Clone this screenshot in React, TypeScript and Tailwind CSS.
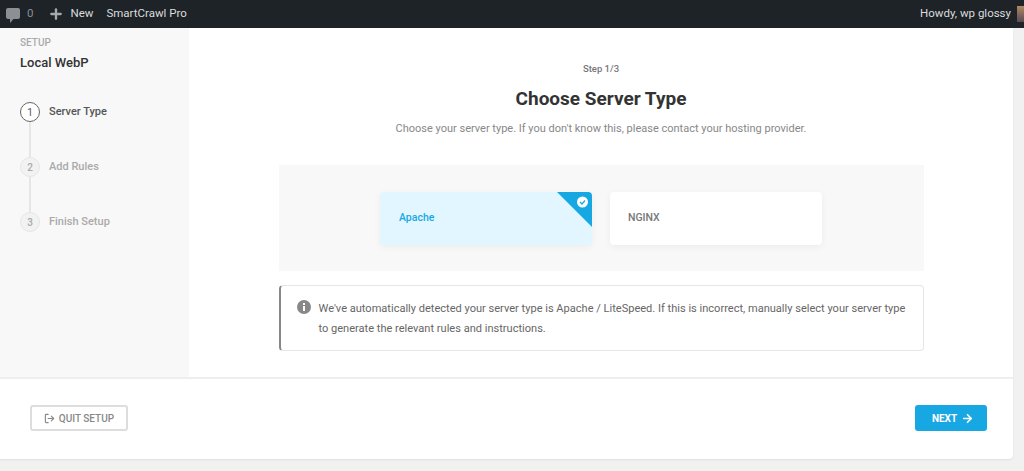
import { ArrowRight, LogOut, Plus } from 'lucide-react';

function Step({ n, label, active, last }: { n: number; label: string; active?: boolean; last?: boolean }) {
	return (
		<div className="relative flex h-[55px] items-start">
			{!last && <div className="absolute left-[29px] top-[20px] h-[35px] w-[2px] bg-[#e6e6e6]" />}
			<div
				className={
					active
						? 'ml-[20px] flex h-[20px] w-[20px] items-center justify-center rounded-full border border-[#666] bg-white text-[10px] text-[#555]'
						: 'ml-[20px] flex h-[20px] w-[20px] items-center justify-center rounded-full border border-[#e6e6e6] bg-[#f2f2f2] text-[10px] font-medium text-[#aaa]'
				}
			>
				{n}
			</div>
			<span
				className={
					active
						? 'ml-[9px] text-[11px] font-medium leading-[20px] text-[#555]'
						: 'ml-[9px] text-[11px] font-medium leading-[20px] text-[#aaa]'
				}
			>
				{label}
			</span>
		</div>
	);
}

export default function App() {
	return (
		<div className="h-[471px] w-[1024px] overflow-hidden bg-[#f1f1f1] font-['Roboto',sans-serif]">
			<header className="flex h-[28px] items-center justify-between bg-[#1d2327] text-[11.5px] text-[#dcdcde]">
				<div className="flex items-center">
					<svg className="ml-[6px] mt-[2px]" width="14" height="15" viewBox="0 0 14 15">
						<path d="M2 0h10a2 2 0 0 1 2 2v7a2 2 0 0 1-2 2H7.5L4 15v-4H2a2 2 0 0 1-2-2V2a2 2 0 0 1 2-2Z" fill="#8c8f94" />
					</svg>
					<span className="ml-[7px] text-[#8c8f94]">0</span>
					<Plus size={16} strokeWidth={3.5} className="ml-[15px] text-[#a7aaad]" />
					<span className="ml-[6px]">New</span>
					<span className="ml-[13px]">SmartCrawl Pro</span>
				</div>
				<div className="flex items-center">
					<span>Howdy, wp glossy</span>
					<div className="ml-[6px] h-[16px] w-[7px] bg-gradient-to-b from-[#b08a60] to-[#5a4a55]" />
				</div>
			</header>

			<div className="h-[431px] w-[1013px] rounded-br-[4px] bg-white shadow-[0_1px_2px_rgba(0,0,0,0.08)]">
				<div className="flex h-[351px] border-b-2 border-[#eeeeee]">
					<aside className="h-full w-[189px] bg-[#f8f8f8]">
						<div className="ml-[20px] mt-[9px] text-[10px] font-medium leading-[12px] text-[#aaa]">SETUP</div>
						<div className="ml-[20px] mt-[6px] text-[13px] font-medium leading-[16px] text-[#333]">Local WebP</div>
						<div className="mt-[31px]">
							<Step n={1} label="Server Type" active />
							<Step n={2} label="Add Rules" />
							<Step n={3} label="Finish Setup" last />
						</div>
					</aside>

					<main className="flex flex-1 flex-col items-center">
						<div className="mt-[35px] text-[9.5px] font-medium leading-[12px] text-[#777]">Step 1/3</div>
						<h1 className="mt-[11px] text-[19px] font-bold leading-[26px] text-[#333]">Choose Server Type</h1>
						<p className="mt-[9px] text-[11px] leading-[16px] text-[#888]">
							Choose your server type. If you don't know this, please contact your hosting provider.
						</p>

						<div className="mt-[28px] flex h-[106px] w-[645px] items-center justify-center gap-[18px] bg-[#f8f8f8]">
							<div className="relative flex h-[53px] w-[212px] items-center overflow-hidden rounded-[4px] bg-[#e1f6ff] pl-[19px] text-[10.5px] font-medium text-[#17a8e3] shadow-[0_2px_7px_rgba(0,0,0,0.05)]">
								Apache
								<svg className="absolute right-0 top-0" width="35" height="35" viewBox="0 0 35 35">
									<path d="M0 0H35V35Z" fill="#17a8e3" />
									<circle cx="25.5" cy="10" r="5.5" fill="#fff" />
									<path d="M23 10l2 2 3-3.5" fill="none" stroke="#17a8e3" strokeWidth="1.2" />
								</svg>
							</div>
							<div className="flex h-[53px] w-[212px] items-center rounded-[4px] bg-white pl-[18px] text-[10.5px] font-medium text-[#777] shadow-[0_2px_7px_rgba(0,0,0,0.05)]">
								NGINX
							</div>
						</div>

						<div className="mt-[14px] flex h-[66px] w-[645px] rounded-[4px] border border-l-2 border-[#e6e6e6] border-l-[#888] pl-[16px] pt-[13px]">
							<svg className="mt-[1px] shrink-0" width="14" height="14" viewBox="0 0 14 14">
								<circle cx="7" cy="7" r="7" fill="#888" />
								<rect x="6" y="6" width="2" height="5" fill="#fff" />
								<rect x="6" y="3" width="2" height="2" fill="#fff" />
							</svg>
							<p className="ml-[8px] w-[592px] text-[11.05px] leading-[20px] text-[#666]">
								We've automatically detected your server type is Apache / LiteSpeed. If this is incorrect, manually select your server type to generate the relevant rules and instructions.
							</p>
						</div>
					</main>
				</div>

				<footer className="flex h-[80px] items-center justify-between pb-[2px] pl-[30px] pr-[26px]">
					<button className="flex h-[26px] w-[98px] items-center justify-center rounded-[3px] border-2 border-[#dddddd] text-[10px] font-medium text-[#888]">
						<LogOut size={11} strokeWidth={2.5} className="mr-[4px] text-[#888]" />
						QUIT SETUP
					</button>
					<button className="flex h-[26px] w-[72px] items-center justify-center rounded-[3px] bg-[#17a8e3] pl-[4px] text-[10px] font-bold text-white">
						NEXT
						<ArrowRight size={13} strokeWidth={3} className="ml-[4px]" />
					</button>
				</footer>
			</div>
		</div>
	);
}
